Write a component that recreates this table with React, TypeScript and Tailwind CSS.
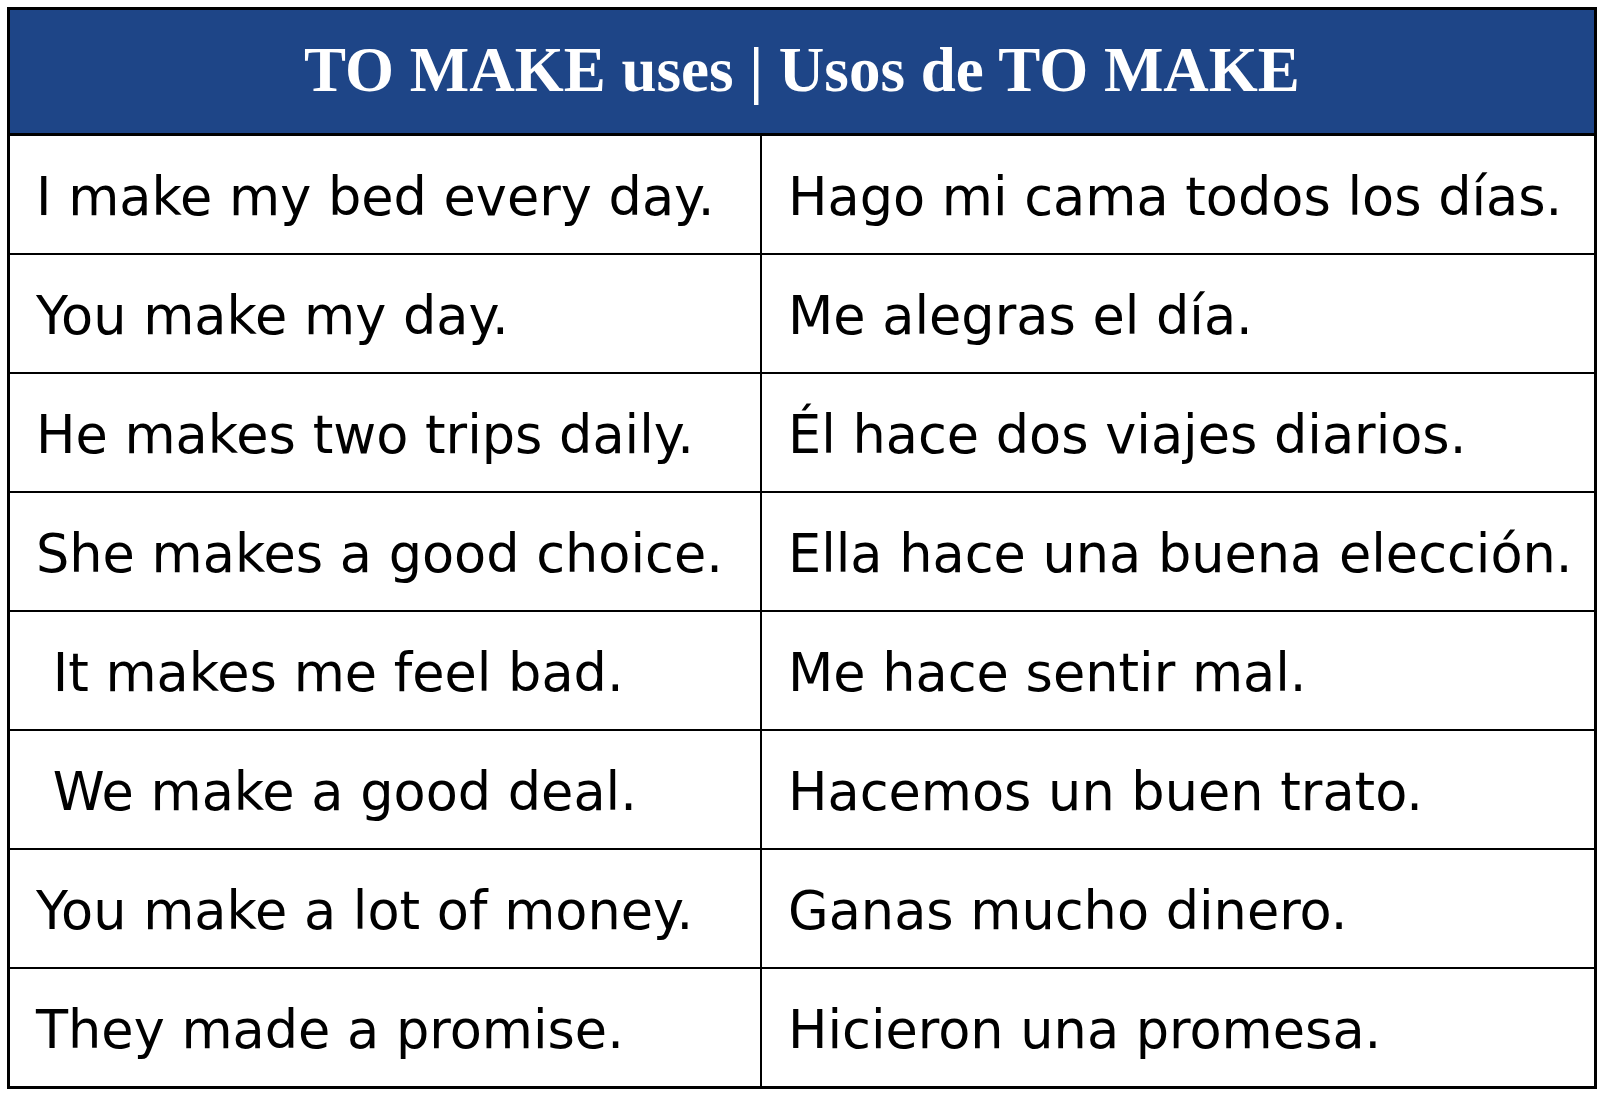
import React from 'react'

const rows = [
  ['I make my bed every day.', 'Hago mi cama todos los días.'],
  ['You make my day.', 'Me alegras el día.'],
  ['He makes two trips daily.', 'Él hace dos viajes diarios.'],
  ['She makes a good choice.', 'Ella hace una buena elección.'],
  ['\u00a0It makes me feel bad.', 'Me hace sentir mal.'],
  ['\u00a0We make a good deal.', 'Hacemos un buen trato.'],
  ['You make a lot of money.', 'Ganas mucho dinero.'],
  ['They made a promise.', 'Hicieron una promesa.'],
]

export default function App() {
  return (
    <main className="w-[1600px] h-[1094px] bg-white pt-[7px] pl-[7px]">
      <div className="w-[1590px] border-[3px] border-black">
        {/* Header */}
        <div className="h-[126px] bg-[#1e4587] border-b-[3px] border-black flex items-center justify-center pb-[2px]">
          <h1 className="text-white font-bold text-[63px] leading-none font-['Liberation_Serif',serif]">
            TO MAKE uses | Usos de TO MAKE
          </h1>
        </div>

        {/* Rows */}
        {rows.map((row, i) => (
          <div
            key={i}
            className={`grid grid-cols-[752px_1fr] ${i < rows.length - 1 ? 'h-[119px] border-b-2 border-black' : 'h-[117px]'}`}
          >
            <div className="border-r-2 border-black flex items-center pl-[26px] pt-[6px]">
              <span className="text-[52.5px] text-black leading-none font-['DejaVu_Sans',sans-serif] whitespace-pre">{row[0]}</span>
            </div>
            <div className="flex items-center pl-[26px] pt-[6px]">
              <span className="text-[52.5px] text-black leading-none font-['DejaVu_Sans',sans-serif] whitespace-pre">{row[1]}</span>
            </div>
          </div>
        ))}
      </div>
    </main>
  )
}
